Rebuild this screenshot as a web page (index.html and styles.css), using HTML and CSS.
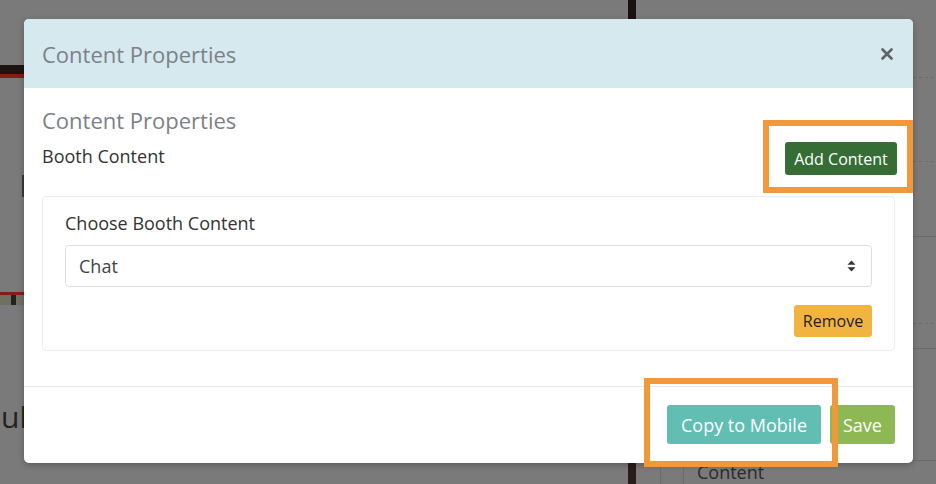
FILE: index.html
```html
<!DOCTYPE html>
<html>
<head>
<meta charset="utf-8">
<link rel="stylesheet" href="styles.css">
</head>
<body>
<div class="page">
  <div class="bg-bar-left"></div>
  <div class="bg-ibar"></div>
  <div class="bg-strip"></div>
  <div class="bg-heading">Schedul</div>
  <div class="bg-top-post"></div>
  <div class="bg-bottom-post"></div>
  <div class="bg-vline bg-vline-1"></div>
  <div class="bg-vline bg-vline-2"></div>
  <div class="bg-content">Content</div>
  <div class="bg-hline dashed" style="top:77px"></div>
  <div class="bg-hline dashed" style="top:161px"></div>
  <div class="bg-hline" style="top:236px"></div>
  <div class="bg-hline dashed" style="top:323px"></div>
  <div class="bg-hline" style="top:348px"></div>
  <div class="bg-hline" style="top:460px"></div>
</div>

<div class="modal">
  <div class="modal-header">
    <h4 class="modal-title">Content Properties</h4>
    <button class="close" aria-label="Close">
      <svg width="12" height="12" viewBox="0 0 12 12"><path d="M1.5 1.5 L10.5 10.5 M10.5 1.5 L1.5 10.5" stroke="#5f6368" stroke-width="2.6" stroke-linecap="round"/></svg>
    </button>
  </div>
  <div class="modal-body">
    <h4 class="section-title">Content Properties</h4>
    <div class="row">
      <div class="row-label">Booth Content</div>
      <button class="btn btn-add">Add Content</button>
    </div>
    <div class="card">
      <label class="card-label">Choose Booth Content</label>
      <div class="select">
        <span>Chat</span>
        <svg width="9" height="12" viewBox="0 0 9 12"><path d="M4.5 0.5 L8.5 4.8 L0.5 4.8 Z M4.5 11.5 L8.5 7.2 L0.5 7.2 Z" fill="#333"/></svg>
      </div>
      <div class="card-actions">
        <button class="btn btn-remove">Remove</button>
      </div>
    </div>
  </div>
  <div class="modal-footer">
    <button class="btn btn-copy">Copy to Mobile</button>
    <button class="btn btn-save">Save</button>
  </div>
</div>

<div class="highlight hl-add"></div>
<div class="highlight hl-copy"></div>
</body>
</html>
```
FILE: styles.css
```css
* { box-sizing: border-box; }
html, body { margin: 0; padding: 0; }
body {
  width: 936px;
  height: 484px;
  overflow: hidden;
  background: #7a7a7a;
  font-family: "Open Sans", "Noto Sans", sans-serif;
  position: relative;
}
.page { position: absolute; inset: 0; }
.bg-bar-left { position: absolute; left: 0; top: 65px; width: 24px; height: 13px; background: #1e1510; border-bottom: 4px solid #861c14; }
.bg-ibar { position: absolute; left: 22px; top: 175px; width: 2px; height: 22px; background: #3a3a3a; }
.bg-strip { position: absolute; left: 0; top: 292px; width: 24px; height: 13px; background: linear-gradient(90deg, #6f7060 0 11px, #222 11px 16px, #707060 16px); border-top: 3px solid #861c14; }
.bg-heading { position: absolute; right: 909px; top: 396px; font-size: 30px; color: #222; white-space: nowrap; }
.bg-top-post { position: absolute; left: 628px; top: 0; width: 8px; height: 19px; background: #1a1210; }
.bg-bottom-post { position: absolute; left: 628px; top: 463px; width: 8px; height: 21px; background: #2a1c16; }
.bg-vline { position: absolute; top: 463px; width: 1px; height: 21px; background: #6c6c6c; }
.bg-vline-1 { left: 660px; }
.bg-vline-2 { left: 683px; }
.bg-content { position: absolute; left: 697px; top: 460px; font-size: 18px; color: #2a2a2a; }
.bg-hline { position: absolute; left: 913px; width: 23px; height: 1px; background: #6c6c6c; }
.bg-hline.dashed { background: repeating-linear-gradient(90deg, #6a6a6a 0 3px, transparent 3px 6px); }

.modal {
  position: absolute;
  left: 24px;
  top: 19px;
  width: 889px;
  height: 444px;
  background: #fff;
  border-radius: 5px;
  overflow: hidden;
  display: flex;
  flex-direction: column;
  box-shadow: 0 2px 6px rgba(0,0,0,0.25);
}
.modal-header {
  height: 69px;
  background: #d6e9ef;
  display: flex;
  align-items: center;
  justify-content: space-between;
  padding: 0 18px;
}
.modal-title, .section-title {
  margin: 0;
  font-size: 22px;
  font-weight: 400;
  color: #7c8188;
  line-height: 24px;
}
.close {
  border: 0;
  background: none;
  padding: 0;
  margin-right: 2px;
  display: flex;
}
.modal-body {
  padding: 20px 18px 35px;
  border-bottom: 1px solid #e6e6e6;
}
.row {
  display: flex;
  justify-content: space-between;
  align-items: flex-start;
  margin-top: 10px;
  margin-right: -2px;
}
.row-label {
  margin-top: 3px;
  font-size: 18px;
  line-height: 22px;
  color: #333;
}
.btn {
  border: 0;
  border-radius: 3px;
  font-family: "Open Sans", "Noto Sans", sans-serif;
  cursor: pointer;
}
.btn-add {
  height: 33px;
  width: 112px;
  padding: 0;
  background: #356d35;
  color: #fff;
  font-size: 16px;
}
.card {
  margin-top: 21px;
  border: 1px solid #ececec;
  border-radius: 4px;
  padding: 15px 22px 13px;
  display: flex;
  flex-direction: column;
}
.card-label {
  font-size: 18px;
  line-height: 22px;
  color: #333;
}
.select {
  margin-top: 11px;
  height: 42px;
  border: 1px solid #dedede;
  border-radius: 4px;
  display: flex;
  align-items: center;
  justify-content: space-between;
  padding: 0 15px 0 13px;
  font-size: 18px;
  color: #444;
}
.card-actions {
  margin-top: 18px;
  display: flex;
  justify-content: flex-end;
}
.btn-remove {
  width: 78px;
  height: 32px;
  padding: 0;
  background: #f2b440;
  color: #222;
  font-size: 16px;
}
.modal-footer {
  flex: 1;
  display: flex;
  justify-content: flex-end;
  align-items: flex-start;
  gap: 9px;
  padding: 18px 18px 0;
}
.btn-copy, .btn-save {
  height: 39px;
  padding: 0;
  color: #fff;
  font-size: 18px;
}
.btn-copy { width: 154px; background: #62bdb3; }
.btn-save { width: 65px; background: #8db854; }

.highlight {
  position: absolute;
  border: 6px solid #f0983a;
  pointer-events: none;
}
.hl-add { left: 763px; top: 120px; width: 150px; height: 73px; }
.hl-copy { left: 644px; top: 378px; width: 194px; height: 89px; }
```
